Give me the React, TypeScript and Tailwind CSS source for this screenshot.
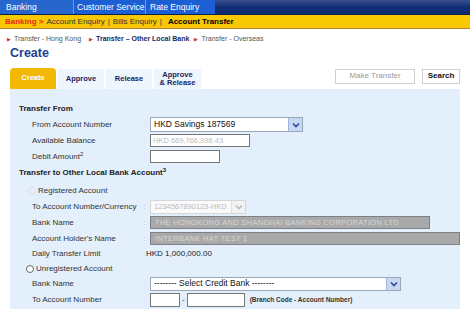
import React from 'react';

const Chevron = ({ faded }: { faded?: boolean }) => (
  <span className={`flex h-full w-[14px] items-center justify-center border-l ${faded ? 'border-[#e0e0e0] bg-[#f3f3f3]' : 'border-[#9fb4dc] bg-[#c9d8f2]'}`}>
    <svg width="8" height="6" viewBox="0 0 8 6">
      <path d="M1 1.5 L4 4.5 L7 1.5" fill="none" stroke={faded ? '#b9b9b9' : '#2a4d9a'} strokeWidth="1.6" />
    </svg>
  </span>
);

const Label = ({ children }: { children: React.ReactNode }) => (
  <>
    <span className="w-[111px] shrink-0 pl-[22px] box-content">{children}</span>
    <span className="w-[7px] shrink-0 text-[#bbb]">:</span>
  </>
);

const App: React.FC = () => {
  return (
    <div className="h-[309px] w-[470px] overflow-hidden whitespace-nowrap bg-white font-['Liberation_Sans',Arial,sans-serif] text-[#333]">
      {/* top nav */}
      <div className="flex h-[15px] border-b border-[#0a1f55] text-[8.5px] text-white">
        <div className="flex w-[74px] items-center bg-[#2766cc] pl-[6px] border-r border-[#6d9be6]">Banking</div>
        <div className="flex w-[72px] items-center bg-[#1c5fd4] pl-[3px] border-r border-[#6d9be6]">Customer Service</div>
        <div className="flex w-[69px] items-center bg-[#1c5fd4] pl-[4px]">Rate Enquiry</div>
        <div className="flex-1 bg-gradient-to-b from-[#3a4f8e] via-[#102f78] to-[#0b2a6c]" />
      </div>
      {/* yellow bar */}
      <div className="flex h-[14px] items-center gap-[3px] border-b border-[#b8863a] bg-[#f8c800] pl-[5px] text-[8px] text-[#333]">
        <span className="font-bold text-[#e8261c]">Banking &gt;</span>
        <span>Account Enquiry</span>
        <span>|</span>
        <span>Bills Enquiry</span>
        <span>|</span>
        <span className="ml-[3px] font-bold text-black">Account Transfer</span>
      </div>
      {/* breadcrumb */}
      <div className="mt-[5px] flex items-center pl-[7px] text-[7px] text-[#555]">
        <span className="mr-[3px] text-[5px] text-[#c33]">▶</span>
        <span>Transfer - Hong Kong</span>
        <span className="ml-[8px] mr-[3px] text-[5px] text-[#c33]">▶</span>
        <span className="font-bold text-[#1a2a5a]">Transfer – Other Local Bank</span>
        <span className="ml-[5px] mr-[3px] text-[5px] text-[#c33]">▶</span>
        <span>Transfer - Overseas</span>
      </div>
      <div className="pl-[10px] text-[12.5px] font-bold leading-[16px] text-[#1c3f94]">Create</div>

      {/* tabs + buttons */}
      <div className="mt-[7px] flex items-end px-[10px]">
        <div className="flex h-[21px] w-[46px] items-center justify-center rounded-t-[4px] bg-[#f3b705] text-[7.5px] font-bold text-white">Create</div>
        <div className="ml-[2px] flex h-[20px] w-[46px] items-center justify-center bg-[#eef5fc] text-[7.5px] font-bold text-[#1a2560]">Approve</div>
        <div className="ml-[2px] flex h-[20px] w-[46px] items-center justify-center bg-[#eef5fc] text-[7.5px] font-bold text-[#1a2560]">Release</div>
        <div className="ml-[2px] flex h-[20px] w-[47px] flex-col items-center justify-center bg-[#eef5fc] text-[7.5px] font-bold leading-[8px] text-[#1a2560]">
          <span>Approve</span>
          <span>&amp; Release</span>
        </div>
        <div className="ml-auto mb-[5px] flex gap-[7px]">
          <div className="flex h-[15px] w-[80px] items-center justify-center border border-[#d0d0d0] bg-white text-[8px] text-[#999]">Make Transfer</div>
          <div className="flex h-[15px] w-[38px] items-center justify-center border border-[#d0d0d0] bg-white text-[8px] font-bold text-[#111]">Search</div>
        </div>
      </div>

      {/* panel */}
      <div className="mx-[10px] h-[220px] bg-[#e3effb] pt-[13px] text-[8px]">
        <div className="flex h-[15px] items-center pl-[9px] font-bold text-[#222]">Transfer From</div>
        <div className="flex h-4 items-center">
          <Label>From Account Number</Label>
          <div className="flex h-[15px] w-[153px] items-center justify-between border border-[#9aa7b8] bg-white pl-[3px] text-[8.5px] text-[#111]">
            <span>HKD Savings 187569</span>
            <Chevron />
          </div>
        </div>
        <div className="flex h-4 items-center">
          <Label>Available Balance</Label>
          <div className="flex h-[13px] w-[100px] items-center border border-[#777] bg-white pl-[2px] text-[7.5px] text-[#bbb]">HKD 669,766,996.43</div>
        </div>
        <div className="flex h-4 items-center">
          <Label>Debit Amount<sup className="text-[6px]">2</sup></Label>
          <div className="h-[13px] w-[70px] border border-[#777] bg-white" />
        </div>
        <div className="flex h-4 items-center pl-[9px] font-bold text-[#222]">
          Transfer to Other Local Bank Account<sup className="text-[6px]">3</sup>
        </div>
        <div className="mt-[2px] flex h-4 items-center pl-[18px]">
          <span className="mr-[2px] h-[8px] w-[8px] rounded-full border border-[#d8e2ee]" />
          <span className="text-[#333]">Registered Account</span>
        </div>
        <div className="flex h-4 items-center">
          <Label>To Account Number/Currency</Label>
          <div className="flex h-[14px] w-[96px] items-center justify-between overflow-hidden border border-[#d6d6d6] bg-[#fafafa] pl-[3px] text-[7.5px] text-[#bbb]">
            <span>1234567890123-HKD</span>
            <Chevron faded />
          </div>
        </div>
        <div className="flex h-4 items-center">
          <Label>Bank Name</Label>
          <div className="flex h-[13px] w-[280px] items-center border border-[#7c8088] bg-[#a9a9a9] pl-[4px] text-[7.5px] tracking-[0.3px] text-[#d6d6d6]">THE HONGKONG AND SHANGHAI BANKING CORPORATION LTD</div>
        </div>
        <div className="flex h-4 items-center">
          <Label>Account Holder's Name</Label>
          <div className="flex h-[13px] w-[312px] items-center border border-[#7c8088] bg-[#a9a9a9] pl-[4px] text-[7.5px] tracking-[0.3px] text-[#d6d6d6]">INTERBANK HAT TEST 1</div>
        </div>
        <div className="flex h-[15px] items-center">
          <Label>Daily Transfer Limit</Label>
          <span className="-ml-[4px] text-[#222]">HKD 1,000,000.00</span>
        </div>
        <div className="flex h-[14px] items-center pl-[16px]">
          <span className="mr-[2px] h-[8px] w-[8px] rounded-full border border-[#666] bg-white" />
          <span className="text-[#333]">Unregistered Account</span>
        </div>
        <div className="flex h-4 items-center">
          <Label>Bank Name</Label>
          <div className="flex h-[14px] w-[251px] items-center justify-between border border-[#9aa7b8] bg-white pl-[3px] text-[8.5px] text-[#111]">
            <span>-------- Select Credit Bank --------</span>
            <Chevron />
          </div>
        </div>
        <div className="flex h-4 items-center">
          <Label>To Account Number</Label>
          <div className="h-[14px] w-[30px] border border-[#777] bg-white" />
          <span className="mx-[2px] text-[#333]">-</span>
          <div className="h-[14px] w-[58px] border border-[#777] bg-white" />
          <span className="ml-[5px] text-[6.5px] font-bold text-[#333]">(Branch Code - Account Number)</span>
        </div>
      </div>
    </div>
  );
};

export default App;
